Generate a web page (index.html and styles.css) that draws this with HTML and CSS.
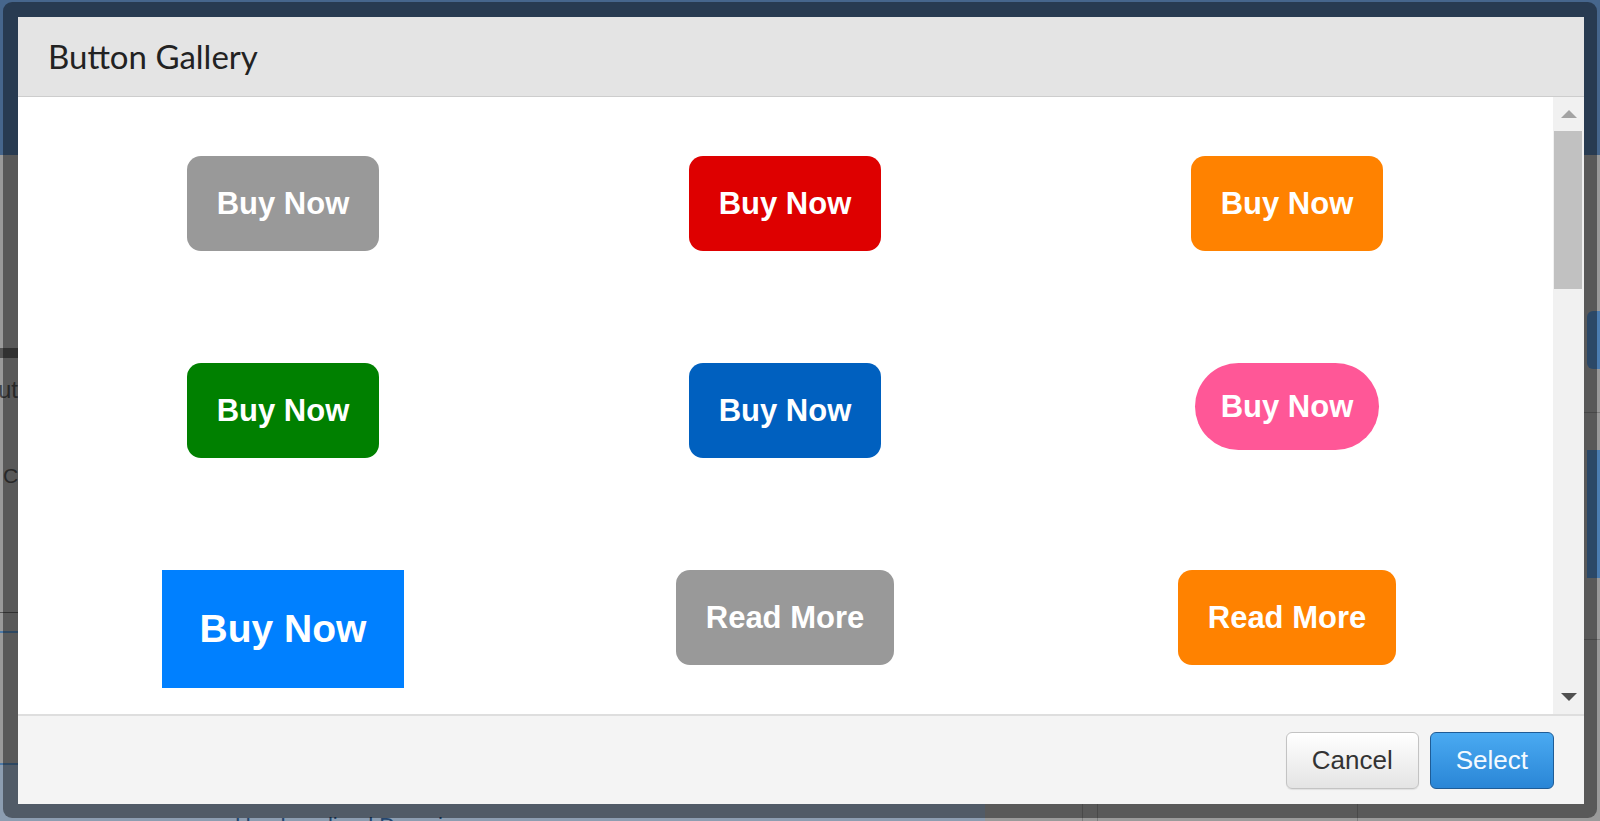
FILE: index.html
```html
<!DOCTYPE html>
<html lang="en">
<head>
<meta charset="utf-8">
<title>Button Gallery</title>
<link rel="stylesheet" href="styles.css">
</head>
<body>
<div class="page">
  <div class="page-head"></div>
  <div class="page-mid">
    <div class="mid-left">
      <div class="bar-dark"></div>
      <div class="ghost-text ghost-ut">Butt</div>
      <div class="ghost-text ghost-c">C</div>
      <div class="line-grey"></div>
      <div class="line-navy"></div>
    </div>
    <div class="mid-right">
      <div class="blk blk-1"></div>
      <div class="line-grey r1"></div>
      <div class="blk blk-2"></div>
      <div class="line-grey r2"></div>
    </div>
  </div>
  <div class="page-foot">
    <div class="foot-left"><span class="foot-text">Use Localized Domain</span></div>
    <div class="foot-right">
      <span class="vline v1"></span>
      <span class="vline v2"></span>
      <span class="vline v3"></span>
    </div>
  </div>
</div>

<div class="modal">
  <div class="dialog">
    <div class="dlg-head">
      <h1 class="dlg-title">Button Gallery</h1>
    </div>
    <div class="dlg-body">
      <div class="gallery">
        <span class="btn gray">Buy Now</span>
        <span class="btn red">Buy Now</span>
        <span class="btn orange">Buy Now</span>
        <span class="btn green">Buy Now</span>
        <span class="btn blue">Buy Now</span>
        <span class="btn pink">Buy Now</span>
        <span class="btn big">Buy Now</span>
        <span class="btn gray">Read More</span>
        <span class="btn orange">Read More</span>
      </div>
      <div class="scrollbar">
        <div class="sb-arrow"><span class="tri-up"></span></div>
        <div class="sb-thumb"></div>
        <div class="sb-space"></div>
        <div class="sb-arrow"><span class="tri-down"></span></div>
      </div>
    </div>
    <div class="dlg-foot">
      <button class="fbtn cancel">Cancel</button>
      <button class="fbtn select">Select</button>
    </div>
  </div>
</div>
</body>
</html>
```

FILE: styles.css
```css
html, body {
  margin: 0;
  padding: 0;
  width: 1600px;
  height: 821px;
  overflow: hidden;
  font-family: "Liberation Sans", Arial, sans-serif;
}

/* ---------- page behind the dialog (already dimmed) ---------- */
.page {
  width: 1600px;
  height: 821px;
  display: flex;
  flex-direction: column;
}
.page-head {
  height: 155px;
  background: #46668c;
}
.page-mid {
  height: 608px;
  background: #9a9a9a;
  display: flex;
  justify-content: space-between;
}
.mid-left {
  width: 18px;
  overflow: hidden;
  display: flex;
  flex-direction: column;
}
.bar-dark {
  margin-top: 193px;
  height: 10px;
  background: #555;
}
.ghost-text {
  color: #454545;
  white-space: nowrap;
}
.ghost-ut {
  margin-top: 20px;
  margin-left: -18px;
  font-size: 24px;
  line-height: 24px;
}
.ghost-c {
  margin-top: 63px;
  margin-left: 3px;
  font-size: 21px;
  line-height: 22px;
}
.line-grey {
  height: 1px;
  background: #555;
  margin-top: 125px;
}
.line-navy {
  height: 2px;
  background: #4e7aa8;
  margin-top: 18px;
}
.mid-right {
  width: 16px;
  display: flex;
  flex-direction: column;
  align-items: flex-end;
}
.blk {
  width: 13px;
  background: #4b7db2;
  border-radius: 6px 0 0 6px;
}
.blk-1 {
  margin-top: 156px;
  height: 58px;
}
.blk-2 {
  margin-top: 37px;
  height: 128px;
  border-radius: 0;
}
.mid-right .line-grey {
  width: 16px;
  background: #7a7a7a;
}
.mid-right .r1 { margin-top: 43px; }
.mid-right .r2 { margin-top: 61px; }

.page-foot {
  height: 58px;
  display: flex;
}
.foot-left {
  width: 985px;
  background: #8c9db1;
  border-top: 2px solid #4e7aa8;
  padding-top: 50px;
  padding-left: 235px;
  box-sizing: border-box;
  overflow: hidden;
}
.foot-text {
  font-size: 22px;
  line-height: 1;
  color: #24466e;
  white-space: nowrap;
}
.foot-right {
  flex: 1;
  background: #9a9a9a;
  display: flex;
}
.vline {
  width: 1px;
  background: #7e7e7e;
}
.v1 { margin-left: 97px; }
.v2 { margin-left: 14px; }
.v3 { margin-left: 259px; }

/* ---------- modal ---------- */
.modal {
  position: fixed;
  top: 2px;
  left: 3px;
  right: 3px;
  bottom: 3px;
  background: rgba(0, 0, 0, 0.42);
  border-radius: 9px;
  padding: 15px 13px 14px 15px;
  box-sizing: border-box;
  display: flex;
}
.dialog {
  flex: 1;
  display: flex;
  flex-direction: column;
  background: #fff;
  min-width: 0;
}
.dlg-head {
  height: 79px;
  background: #e4e4e4;
  border-bottom: 1px solid #cdcdcd;
  display: flex;
  align-items: center;
  padding-left: 30px;
  flex-shrink: 0;
}
.dlg-title {
  margin: 0;
  font-family: Lato, "Open Sans", sans-serif;
  font-weight: 400;
  font-size: 33px;
  color: #222;
  line-height: 1;
}

.dlg-body {
  flex: 1;
  display: flex;
  min-height: 0;
  background: #fff;
}
.gallery {
  flex: 1;
  overflow: hidden;
  display: grid;
  grid-template-columns: repeat(3, 1fr);
  grid-auto-rows: 207px;
  align-items: start;
  justify-items: center;
  padding: 59px 15px 0 14px;
}

.btn {
  display: inline-flex;
  align-items: center;
  justify-content: center;
  box-sizing: border-box;
  height: 95px;
  padding: 0 30px;
  border-radius: 14px;
  font-family: "Liberation Sans", Arial, sans-serif;
  font-weight: 700;
  font-size: 31px;
  color: #fff;
  white-space: nowrap;
}
.gray { background: #999999; }
.red { background: #de0000; }
.orange { background: #ff8200; }
.green { background: #008000; }
.blue { background: #0060bf; }
.pink {
  background: #ff5797;
  height: 87px;
  padding: 0 26px;
  border-radius: 44px;
}
.big {
  background: #0080ff;
  height: 118px;
  padding: 0 38px;
  border-radius: 0;
  font-size: 39px;
}

/* ---------- fake scrollbar ---------- */
.scrollbar {
  width: 31px;
  background: #f1f1f1;
  display: flex;
  flex-direction: column;
  flex-shrink: 0;
}
.sb-arrow {
  height: 34px;
  display: flex;
  align-items: center;
  justify-content: center;
}
.tri-up {
  width: 0;
  height: 0;
  border-left: 8px solid transparent;
  border-right: 8px solid transparent;
  border-bottom: 8px solid #a3a3a3;
}
.tri-down {
  width: 0;
  height: 0;
  border-left: 8px solid transparent;
  border-right: 8px solid transparent;
  border-top: 8px solid #505050;
}
.sb-thumb {
  height: 158px;
  margin: 0 2px 0 1px;
  background: #c1c1c1;
}
.sb-space {
  flex: 1;
}

/* ---------- footer ---------- */
.dlg-foot {
  height: 88px;
  border-top: 2px solid #dedede;
  background: #f4f4f4;
  display: flex;
  justify-content: flex-end;
  align-items: center;
  gap: 11px;
  padding-right: 30px;
  flex-shrink: 0;
}
.fbtn {
  height: 57px;
  padding: 0 25px;
  border-radius: 6px;
  font-family: "Liberation Sans", Arial, sans-serif;
  font-size: 26px;
  cursor: pointer;
  box-sizing: border-box;
}
.cancel {
  color: #333;
  background: linear-gradient(#ffffff, #e4e4e4);
  border: 1px solid #c3c3c3;
  box-shadow: 0 1px 1px rgba(0, 0, 0, 0.08);
}
.select {
  color: #f4faff;
  background: linear-gradient(#4aaaf2, #2a86d6);
  border: 1px solid #1f5c96;
}
```
